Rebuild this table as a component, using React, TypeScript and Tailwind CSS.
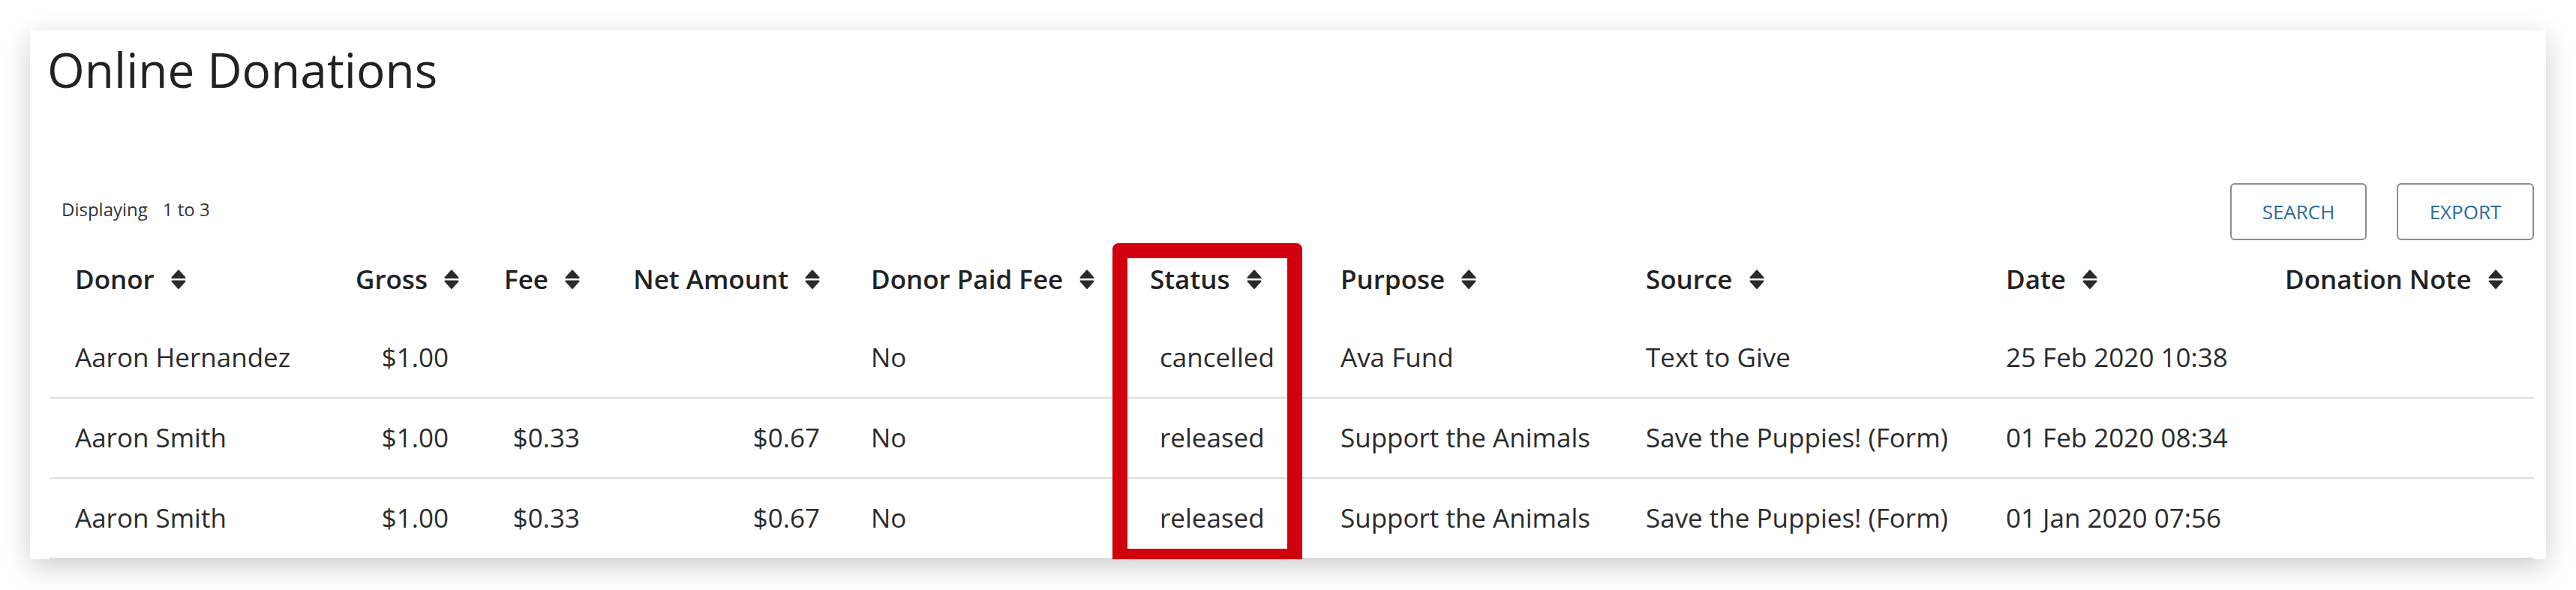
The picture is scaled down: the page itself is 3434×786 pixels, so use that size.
import React from "react";

type Col = { label: string; width: string; right?: boolean };

const columns: Col[] = [
  { label: "Donor", width: "w-[374px]" },
  { label: "Gross", width: "w-[192px]", right: true },
  { label: "Fee", width: "w-[175px]", right: true },
  { label: "Net Amount", width: "w-[320px]", right: true },
  { label: "Donor Paid Fee", width: "w-[372px]" },
  { label: "Status", width: "w-[254px]" },
  { label: "Purpose", width: "w-[407px]" },
  { label: "Source", width: "w-[480px]" },
  { label: "Date", width: "w-[372px]" },
  { label: "Donation Note", width: "w-[366px]" },
];

const rows = [
  {
    donor: "Aaron Hernandez",
    gross: "$1.00",
    fee: "",
    net: "",
    paid: "No",
    status: "cancelled",
    purpose: "Ava Fund",
    source: "Text to Give",
    date: "25 Feb 2020 10:38",
    note: "",
  },
  {
    donor: "Aaron Smith",
    gross: "$1.00",
    fee: "$0.33",
    net: "$0.67",
    paid: "No",
    status: "released",
    purpose: "Support the Animals",
    source: "Save the Puppies! (Form)",
    date: "01 Feb 2020 08:34",
    note: "",
  },
  {
    donor: "Aaron Smith",
    gross: "$1.00",
    fee: "$0.33",
    net: "$0.67",
    paid: "No",
    status: "released",
    purpose: "Support the Animals",
    source: "Save the Puppies! (Form)",
    date: "01 Jan 2020 07:56",
    note: "",
  },
];

function SortIcon() {
  return (
    <svg width="20" height="27" viewBox="0 0 20 27" className="shrink-0">
      <path d="M10 1.5 L18.5 11 H1.5 Z" fill="#2b2b2b" stroke="#2b2b2b" strokeWidth="2" strokeLinejoin="round" />
      <path d="M1.5 15.5 H18.5 L10 25 Z" fill="#2b2b2b" stroke="#2b2b2b" strokeWidth="2" strokeLinejoin="round" />
    </svg>
  );
}

export default function App() {
  return (
    <div className="min-h-screen bg-white px-[40px] pt-[40px] pb-[41px] font-['Open_Sans',sans-serif] text-[#2b2b2b]">
      <div className="relative bg-white pl-[26px] pr-[16px] shadow-[0_10px_34px_rgba(0,0,0,0.2)]">
        <h1 className="pt-[21px] -ml-[3px] text-[64px] leading-none font-normal text-[#222]">Online Donations</h1>

        <div className="mt-[119px] flex h-[76px] items-start justify-between">
          <div className="mt-[23px] pl-[16px] text-[24px] leading-none text-[#333]">
            Displaying<span className="ml-[20px]">1 to 3</span>
          </div>
          <div className="flex gap-[40px]">
            <button className="h-[76px] w-[182px] rounded-[6px] border-2 border-[#8c8c8c] bg-white text-[26px] text-[#2b6a9a]">
              SEARCH
            </button>
            <button className="h-[76px] w-[183px] rounded-[6px] border-2 border-[#8c8c8c] bg-white text-[26px] text-[#2b6a9a]">
              EXPORT
            </button>
          </div>
        </div>

        <table className="w-full table-fixed border-separate border-spacing-0 text-[35px]">
          <colgroup>
            {columns.map((c) => (
              <col key={c.label} className={c.width} />
            ))}
          </colgroup>
          <thead>
            <tr>
              {columns.map((c) => (
                <th
                  key={c.label}
                  className={`h-[104px] px-[34px] align-middle font-semibold whitespace-nowrap text-[#222] ${c.right ? "text-right" : "text-left"}`}
                >
                  <span className="inline-flex items-center gap-[22px]">
                    {c.label}
                    <SortIcon />
                  </span>
                </th>
              ))}
            </tr>
          </thead>
          <tbody>
            {rows.map((r, i) => (
              <tr key={i}>
                <td className="h-[107px] border-b-2 border-[#dcdcdc] px-[34px] align-middle whitespace-nowrap">{r.donor}</td>
                <td className="h-[107px] border-b-2 border-[#dcdcdc] px-[34px] align-middle text-right whitespace-nowrap">{r.gross}</td>
                <td className="h-[107px] border-b-2 border-[#dcdcdc] px-[34px] align-middle text-right whitespace-nowrap">{r.fee}</td>
                <td className="h-[107px] border-b-2 border-[#dcdcdc] px-[34px] align-middle text-right whitespace-nowrap">{r.net}</td>
                <td className="h-[107px] border-b-2 border-[#dcdcdc] px-[34px] align-middle whitespace-nowrap">{r.paid}</td>
                <td className="h-[107px] border-b-2 border-[#dcdcdc] pl-[47px] pr-[10px] align-middle whitespace-nowrap">{r.status}</td>
                <td className="h-[107px] border-b-2 border-[#dcdcdc] px-[34px] align-middle whitespace-nowrap">{r.purpose}</td>
                <td className="h-[107px] border-b-2 border-[#dcdcdc] px-[34px] align-middle whitespace-nowrap">{r.source}</td>
                <td className="h-[107px] border-b-2 border-[#dcdcdc] px-[34px] align-middle whitespace-nowrap">{r.date}</td>
                <td className="h-[107px] border-b-2 border-[#dcdcdc] px-[34px] align-middle whitespace-nowrap">{r.note}</td>
              </tr>
            ))}
          </tbody>
        </table>

        {/* highlight around the Status column */}
        <div className="pointer-events-none absolute left-[1443px] top-[284px] h-[421px] w-[253px] rounded-t-[8px] border-[20px] border-b-[14px] border-[#d0000f]" />
      </div>
    </div>
  );
}
